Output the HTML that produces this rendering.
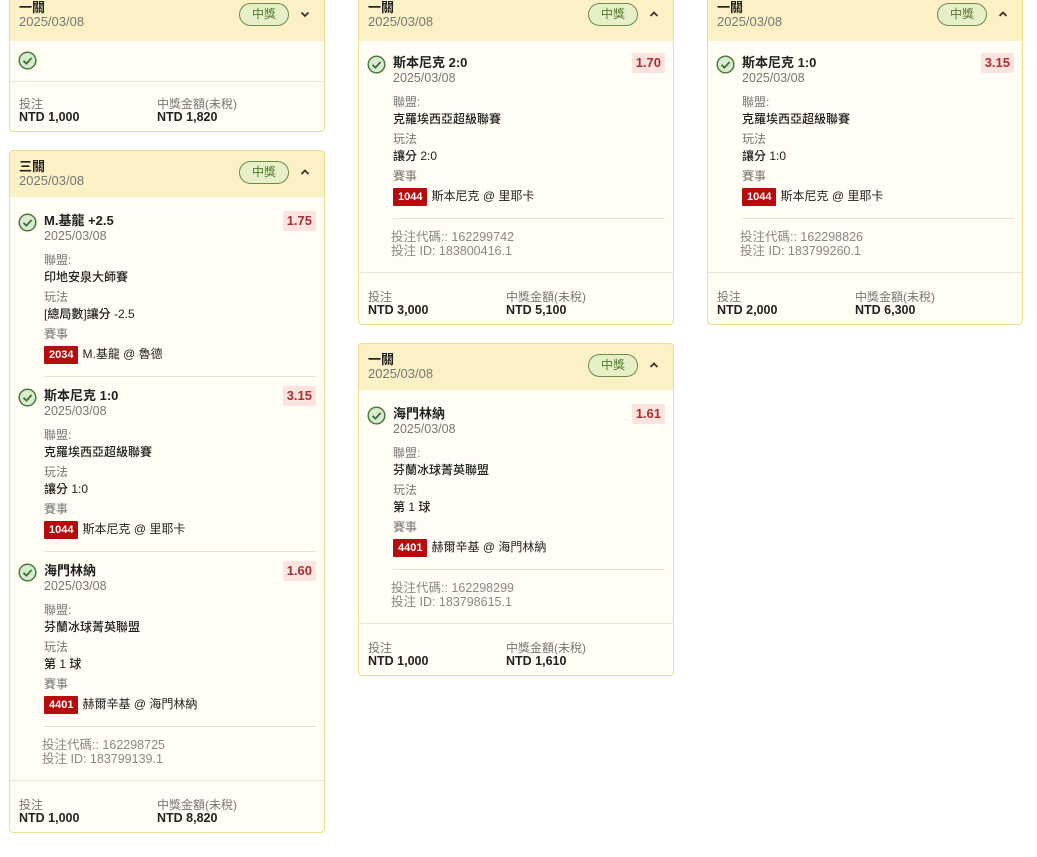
<!DOCTYPE html>
<html><head><meta charset="utf-8"><style>
*{box-sizing:border-box;margin:0;padding:0}
body{width:1037px;height:857px;background:#fff;font-family:"Liberation Sans","Noto Sans CJK TC",sans-serif;position:relative;overflow:hidden;color:#222}
.card{position:absolute;width:316px;border:1px solid #ecdf8a;border-radius:4px;background:#fffdf4;overflow:hidden}
.hd{height:46px;background:#fcf1c4;position:relative;padding:6px 0 0 9px}
.hd .t{font-size:13px;font-weight:bold;line-height:14px;color:#222}
.hd .d{font-size:13px;line-height:14px;color:#777}
.pill{position:absolute;right:35px;width:50px;height:23px;border:1.5px solid #6f8b4a;border-radius:12px;background:#e7efc9;color:#4f7a2c;font-size:12px;text-align:center;line-height:20px}
.chev{position:absolute;right:14px;width:10px;height:10px}
.sel{position:relative;padding:14px 9px 0 34px}
.ck{position:absolute;left:8px;width:19px;height:19px}
.nm{font-size:13px;font-weight:bold;line-height:16px}
.sd{font-size:12.5px;color:#777;line-height:14px}
.odds{position:absolute;right:8px;top:12px;height:20px;padding:0 4px;background:#fbe3df;color:#a8302f;font-weight:bold;font-size:13px;line-height:20px;border-radius:2px}
.lb{font-size:12px;color:#777;line-height:13px}
.vl{font-size:12px;line-height:16px;font-weight:500;color:#222;margin-top:2px}
.m1{margin-top:11px}.m2{margin-top:6px}
.ev{margin-top:4px;height:18px;font-size:12px;line-height:18px}
.bd{display:inline-block;background:#b50d0d;color:#fff;font-weight:bold;font-size:11px;padding:0 5px;height:18px;line-height:18px;border-radius:1px;margin-right:4px}
.dv{border-top:1px solid #e6e2d2;margin:13px 0 0 0;width:272px}
.code{padding-left:32px;margin-top:11px;font-size:12.5px;line-height:14px;color:#888}
.ft{border-top:1px solid #ebe6d5;margin-top:14px;padding:18px 0 7px 9px;position:relative;height:auto}
.ft .a{font-size:12px;color:#777;line-height:13px}
.ft .b{font-size:12.5px;font-weight:bold;line-height:13px}
.ft .c2{position:absolute;left:147px;top:18px}
</style></head><body>

<svg width="0" height="0" style="position:absolute"><defs>
<g id="ck"><circle cx="9.5" cy="9.5" r="8.3" fill="#d9ecd0" stroke="#4b7a3f" stroke-width="1.5"/><path d="M5.5 9.8 L8.4 12.6 L13.6 7" fill="none" stroke="#3f6e35" stroke-width="1.8"/></g>
<g id="dn"><path d="M1.5 3.5 L5 7 L8.5 3.5" fill="none" stroke="#333" stroke-width="1.8"/></g>
<g id="up"><path d="M1.5 7 L5 3.5 L8.5 7" fill="none" stroke="#333" stroke-width="1.8"/></g>
</defs></svg>

<!-- Card 1 -->
<div class="card" style="left:9px;top:-6px;height:138px">
 <div class="hd"><div class="t">一關</div><div class="d">2025/03/08</div>
  <div class="pill" style="top:8px">中獎</div><svg class="chev" style="top:14px"><use href="#dn"/></svg></div>
 <div style="height:40px;position:relative"><svg class="ck" style="top:10px"><use href="#ck"/></svg></div>
 <div class="ft" style="margin-top:0;padding-top:16px"><div class="a">投注</div><div class="b">NTD 1,000</div><div class="c2" style="top:16px"><div class="a">中獎金額(未稅)</div><div class="b">NTD 1,820</div></div></div>
</div>

<!-- Card 2 three legs -->
<div class="card" style="left:9px;top:150px;height:683px">
 <div class="hd" style="height:46px;padding-top:9px"><div class="t">三關</div><div class="d">2025/03/08</div>
  <div class="pill" style="top:10px">中獎</div><svg class="chev" style="top:16px"><use href="#up"/></svg></div>
 <div class="sel" style="padding-top:16px"><svg class="ck" style="top:16px"><use href="#ck"/></svg><div class="odds" style="top:14px">1.75</div>
  <div class="nm">M.基龍 +2.5</div><div class="sd">2025/03/08</div>
  <div class="lb m1">聯盟:</div><div class="vl">印地安泉大師賽</div>
  <div class="lb m2">玩法</div><div class="vl">[總局數]讓分 -2.5</div>
  <div class="lb m2">賽事</div><div class="ev"><span class="bd">2034</span>M.基龍 @ 魯德</div>
  <div class="dv"></div></div>
 <div class="sel" style="padding-top:11px"><svg class="ck" style="top:11px"><use href="#ck"/></svg><div class="odds" style="top:9px">3.15</div>
  <div class="nm">斯本尼克 1:0</div><div class="sd">2025/03/08</div>
  <div class="lb m1">聯盟:</div><div class="vl">克羅埃西亞超級聯賽</div>
  <div class="lb m2">玩法</div><div class="vl">讓分 1:0</div>
  <div class="lb m2">賽事</div><div class="ev"><span class="bd">1044</span>斯本尼克 @ 里耶卡</div>
  <div class="dv"></div></div>
 <div class="sel" style="padding-top:11px"><svg class="ck" style="top:11px"><use href="#ck"/></svg><div class="odds" style="top:9px">1.60</div>
  <div class="nm">海門林納</div><div class="sd">2025/03/08</div>
  <div class="lb m1">聯盟:</div><div class="vl">芬蘭冰球菁英聯盟</div>
  <div class="lb m2">玩法</div><div class="vl">第 1 球</div>
  <div class="lb m2">賽事</div><div class="ev"><span class="bd">4401</span>赫爾辛基 @ 海門林納</div>
  <div class="dv"></div></div>
 <div class="code">投注代碼:: 162298725<br>投注 ID: 183799139.1</div>
 <div class="ft"><div class="a">投注</div><div class="b">NTD 1,000</div><div class="c2"><div class="a">中獎金額(未稅)</div><div class="b">NTD 8,820</div></div></div>
</div>

<!-- Card 3 -->
<div class="card" style="left:358px;top:-6px;height:331px">
 <div class="hd"><div class="t">一關</div><div class="d">2025/03/08</div>
  <div class="pill" style="top:8px">中獎</div><svg class="chev" style="top:14px"><use href="#up"/></svg></div>
 <div class="sel"><svg class="ck" style="top:14px"><use href="#ck"/></svg><div class="odds">1.70</div>
  <div class="nm">斯本尼克 2:0</div><div class="sd">2025/03/08</div>
  <div class="lb m1">聯盟:</div><div class="vl">克羅埃西亞超級聯賽</div>
  <div class="lb m2">玩法</div><div class="vl">讓分 2:0</div>
  <div class="lb m2">賽事</div><div class="ev"><span class="bd">1044</span>斯本尼克 @ 里耶卡</div>
  <div class="dv"></div></div>
 <div class="code">投注代碼:: 162299742<br>投注 ID: 183800416.1</div>
 <div class="ft"><div class="a">投注</div><div class="b">NTD 3,000</div><div class="c2"><div class="a">中獎金額(未稅)</div><div class="b">NTD 5,100</div></div></div>
</div>

<!-- Card 4 -->
<div class="card" style="left:358px;top:343px;height:333px">
 <div class="hd" style="padding-top:9px"><div class="t">一關</div><div class="d">2025/03/08</div>
  <div class="pill" style="top:10px">中獎</div><svg class="chev" style="top:16px"><use href="#up"/></svg></div>
 <div class="sel" style="padding-top:16px"><svg class="ck" style="top:16px"><use href="#ck"/></svg><div class="odds" style="top:14px">1.61</div>
  <div class="nm">海門林納</div><div class="sd">2025/03/08</div>
  <div class="lb m1">聯盟:</div><div class="vl">芬蘭冰球菁英聯盟</div>
  <div class="lb m2">玩法</div><div class="vl">第 1 球</div>
  <div class="lb m2">賽事</div><div class="ev"><span class="bd">4401</span>赫爾辛基 @ 海門林納</div>
  <div class="dv"></div></div>
 <div class="code">投注代碼:: 162298299<br>投注 ID: 183798615.1</div>
 <div class="ft"><div class="a">投注</div><div class="b">NTD 1,000</div><div class="c2"><div class="a">中獎金額(未稅)</div><div class="b">NTD 1,610</div></div></div>
</div>

<!-- Card 5 -->
<div class="card" style="left:707px;top:-6px;height:331px">
 <div class="hd"><div class="t">一關</div><div class="d">2025/03/08</div>
  <div class="pill" style="top:8px">中獎</div><svg class="chev" style="top:14px"><use href="#up"/></svg></div>
 <div class="sel"><svg class="ck" style="top:14px"><use href="#ck"/></svg><div class="odds">3.15</div>
  <div class="nm">斯本尼克 1:0</div><div class="sd">2025/03/08</div>
  <div class="lb m1">聯盟:</div><div class="vl">克羅埃西亞超級聯賽</div>
  <div class="lb m2">玩法</div><div class="vl">讓分 1:0</div>
  <div class="lb m2">賽事</div><div class="ev"><span class="bd">1044</span>斯本尼克 @ 里耶卡</div>
  <div class="dv"></div></div>
 <div class="code">投注代碼:: 162298826<br>投注 ID: 183799260.1</div>
 <div class="ft"><div class="a">投注</div><div class="b">NTD 2,000</div><div class="c2"><div class="a">中獎金額(未稅)</div><div class="b">NTD 6,300</div></div></div>
</div>

</body></html>
